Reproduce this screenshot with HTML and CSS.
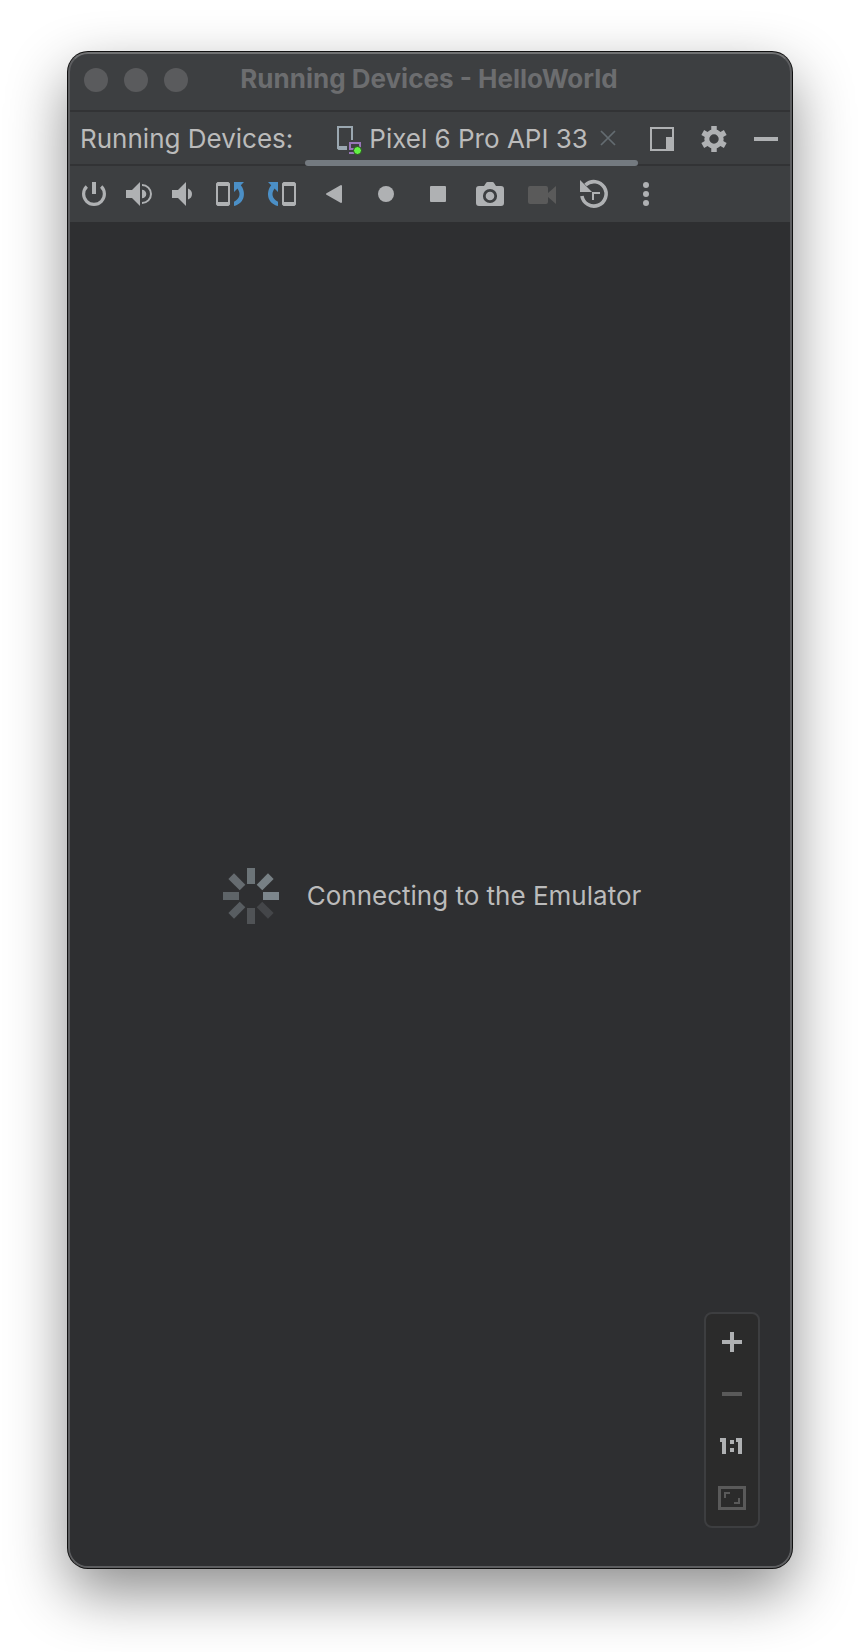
FILE: index.html
```html
<!DOCTYPE html>
<html lang="en">
<head>
<meta charset="utf-8">
<title>Running Devices - HelloWorld</title>
<link rel="stylesheet" href="styles.css">
</head>
<body>
<main class="window">
  <header class="titlebar">
    <div class="lights"><span class="light"></span><span class="light"></span><span class="light"></span></div>
    <h1 class="title">Running Devices - HelloWorld</h1>
  </header>

  <div class="tabs">
    <span class="tabs-label">Running Devices:</span>
    <div class="tab">
      <svg class="icon" viewBox="0 0 32 32" aria-hidden="true">
        <path d="M19 18V5H5v21h9" fill="none" stroke="#9aa7b0" stroke-width="2" stroke-linejoin="round"/>
        <path d="M4 4h16v2H4zM4 24h10v4H5.500l-1.500-1.500z" fill="#9aa7b0"/>
        <path d="M17 28v-7h10v6M22 27h-5M16 31h8" fill="none" stroke="#9876b8" stroke-width="2"/>
        <circle cx="24.500" cy="28.500" r="4" fill="#62f243" stroke="#2b4a22" stroke-width="1"/>
      </svg>
      <span class="tab-name">Pixel 6 Pro API 33</span>
      <button class="close" aria-label="Close tab"><svg viewBox="0 0 16 16" width="16" height="16"><path d="M1 1l14 14M15 1L1 15" stroke="#646c71" stroke-width="1.700"/></svg></button>
    </div>
    <div class="actions">
      <button class="action" aria-label="Window options"><svg class="icon" viewBox="0 0 32 32"><path d="M5 5h22v22H5z" fill="none" stroke="#afb1b3" stroke-width="2"/><path d="M20 14h8v14h-8z" fill="#afb1b3"/></svg></button>
      <button class="action" aria-label="Settings"><svg class="icon" viewBox="0 0 32 32"><g fill="none" stroke="#afb1b3"><circle cx="16" cy="16" r="7.200" stroke-width="5"/><path d="M16 3v5M16 24v5M4.740 9.500l4.330 2.500M22.930 20l4.330 2.500M27.260 9.500L22.930 12M9.070 20l-4.330 2.500" stroke-width="5.500"/></g></svg></button>
      <button class="action" aria-label="Hide"><svg class="icon" viewBox="0 0 32 32"><path d="M4 14h24v4H4z" fill="#afb1b3"/></svg></button>
    </div>
  </div>

  <div class="toolbar">
    <button class="tool tool-narrow" aria-label="Power"><svg class="icon" viewBox="0 0 32 32"><path d="M8.800 8.500A10.400 10.400 0 1 0 23.200 8.500" fill="none" stroke="#afb1b3" stroke-width="3.200"/><path d="M14 4h4v12h-4z" fill="#afb1b3"/></svg></button>
    <button class="tool tool-narrow" aria-label="Volume up"><svg class="icon" viewBox="0 0 32 32"><path d="M4 12h6l8-8v24l-8-8H4zM20 11.700a4.300 4.300 0 0 1 0 8.600z" fill="#afb1b3"/><path d="M20 7a9 9 0 0 1 0 18" fill="none" stroke="#afb1b3" stroke-width="2"/></svg></button>
    <button class="tool tool-narrow" aria-label="Volume down"><svg class="icon" viewBox="0 0 32 32"><path d="M6 12h6l8-8v24l-8-8H6zM22 10.500q4 1.500 4 5.500t-4 5.500z" fill="#afb1b3"/></svg></button>
    <button class="tool" aria-label="Rotate left"><svg class="icon" viewBox="0 0 32 32"><path fill-rule="evenodd" d="M3.500 4h11L16 5.500v21L14.500 28h-11L2 26.500v-21zM4 8v16h10V8z" fill="#afb1b3"/><path d="M20 4h10l-3.200 3.200C32 13.500 31.500 25 20 28v-4.300c6-3 7-8.200 3.500-13.200L20 14z" fill="#4b8fc6"/></svg></button>
    <button class="tool" aria-label="Rotate right"><svg class="icon" viewBox="0 0 32 32"><g transform="translate(32 0) scale(-1 1)"><path fill-rule="evenodd" d="M3.500 4h11L16 5.500v21L14.500 28h-11L2 26.500v-21zM4 8v16h10V8z" fill="#afb1b3"/><path d="M20 4h10l-3.200 3.200C32 13.500 31.500 25 20 28v-4.300c6-3 7-8.200 3.500-13.200L20 14z" fill="#4b8fc6"/></g></svg></button>
    <button class="tool" aria-label="Back"><svg class="icon" viewBox="0 0 32 32"><path d="M9 16L23 8v16z" fill="#afb1b3" stroke="#afb1b3" stroke-width="2" stroke-linejoin="round"/></svg></button>
    <button class="tool" aria-label="Home"><svg class="icon" viewBox="0 0 32 32"><circle cx="16" cy="16" r="8" fill="#afb1b3"/></svg></button>
    <button class="tool" aria-label="Overview"><svg class="icon" viewBox="0 0 32 32"><rect x="8" y="8" width="16" height="16" rx="1" fill="#afb1b3"/></svg></button>
    <button class="tool" aria-label="Take screenshot"><svg class="icon" viewBox="0 0 32 32"><path d="M10 8l2-3q.500-1 1.500-1h5q1 0 1.500 1l2 3h5q3 0 3 3v14q0 3-3 3H5q-3 0-3-3V11q0-3 3-3z" fill="#afb1b3"/><circle cx="16" cy="18" r="5.700" fill="#afb1b3" stroke="#3d3f41" stroke-width="2.800"/></svg></button>
    <button class="tool" aria-label="Record screen" disabled><svg class="icon" viewBox="0 0 32 32"><path d="M4 8h16q2 0 2 2v5l8-7v18l-8-7v5q0 2-2 2H4q-2 0-2-2V10q0-2 2-2z" fill="#5a5a5a"/></svg></button>
    <button class="tool" aria-label="Snapshots"><svg class="icon" viewBox="0 0 32 32"><path d="M7.500 7A12.200 12.200 0 1 1 3.900 18" fill="none" stroke="#afb1b3" stroke-width="3.600"/><path d="M2 2l4.500 4.500L14 14H2z" fill="#afb1b3"/><path d="M15 22v-7h7" fill="none" stroke="#afb1b3" stroke-width="2"/></svg></button>
    <button class="tool" aria-label="More"><svg class="icon" viewBox="0 0 32 32"><g fill="#afb1b3"><circle cx="16" cy="7" r="3"/><circle cx="16" cy="16" r="3"/><circle cx="16" cy="25" r="3"/></g></svg></button>
  </div>

  <section class="screen">
    <div class="status" role="status">
      <svg class="spinner" viewBox="-28 -28 56 56" aria-hidden="true">
        <path d="M12-4h16v8H12z" fill="#7c868c"/>
        <path d="M12-4h16v8H12z" fill="#778085" transform="rotate(-45)"/>
        <path d="M12-4h16v8H12z" fill="#6c7478" transform="rotate(-90)"/>
        <path d="M12-4h16v8H12z" fill="#666c70" transform="rotate(-135)"/>
        <path d="M12-4h16v8H12z" fill="#5e6468" transform="rotate(180)"/>
        <path d="M12-4h16v8H12z" fill="#585d61" transform="rotate(135)"/>
        <path d="M12-4h16v8H12z" fill="#505356" transform="rotate(90)"/>
        <path d="M12-4h16v8H12z" fill="#444649" transform="rotate(45)"/>
      </svg>
      <span>Connecting to the Emulator</span>
    </div>
    <div class="zoom">
      <button class="zoom-button" aria-label="Zoom in"><svg class="icon" viewBox="0 0 32 32"><path d="M6 14h8V6h4v8h8v4h-8v8h-4v-8H6z" fill="#afb1b3"/></svg></button>
      <button class="zoom-button" aria-label="Zoom out" disabled><svg class="icon" viewBox="0 0 32 32"><path d="M6 14h20v4H6z" fill="#5a5a5a"/></svg></button>
      <button class="zoom-button" aria-label="Actual size"><svg class="icon" viewBox="0 0 32 32"><path d="M4 8h6v16H6V12H4zM14 10h4v4h-4zM14 18h4v4h-4zM20 8h6v16h-4V12h-2z" fill="#afb1b3"/></svg></button>
      <button class="zoom-button" aria-label="Fit to screen" disabled><svg class="icon" viewBox="0 0 32 32"><g fill="none" stroke="#5a5a5a"><path d="M3.500 5.500h25v21h-25z" stroke-width="3"/><path d="M9 16v-5h5M18 21h5v-5" stroke-width="2"/></g></svg></button>
    </div>
  </section>
</main>
</body>
</html>
```
FILE: styles.css
```css
* {
  box-sizing: border-box;
}

body {
  margin: 0;
  padding: 52px 68px 84px;
  min-height: 100vh;
  display: flex;
  background: #fff;
  color: #bbb;
  font-family: Inter, "Liberation Sans", sans-serif;
  font-size: 26px;
  line-height: 32px;
}

button {
  margin: 0;
  padding: 0;
  border: 0;
  background: none;
  display: flex;
  align-items: center;
  justify-content: center;
}

.window {
  flex: 1;
  display: flex;
  flex-direction: column;
  border: 2px solid #5d5e60;
  border-top-color: #707172;
  border-radius: 20px;
  background: #3d3f41;
  box-shadow: 0 0 0 1px #111, 0 24px 60px rgba(0, 0, 0, 0.46);
  overflow: hidden;
}

.icon {
  display: block;
  flex: none;
  width: 32px;
  height: 32px;
  overflow: visible;
}

.titlebar {
  display: grid;
  grid-template-columns: 1fr auto 1fr;
  align-items: center;
  height: 58px;
  padding: 0 16px 4px 14px;
  border-bottom: 2px solid #323335;
}

.lights {
  display: flex;
  gap: 16px;
}

.light {
  width: 24px;
  height: 24px;
  border-radius: 50%;
  background: #5a5b5d;
}

.title {
  margin: 0;
  padding-bottom: 2px;
  color: #6c6d6f;
  font-size: 26px;
  font-weight: 700;
}

.tabs {
  display: flex;
  align-items: stretch;
  height: 54px;
  background: linear-gradient(#323335, #323335) bottom / 100% 2px no-repeat;
}

.tabs-label {
  padding: 11px 12px 0 10px;
  white-space: nowrap;
}

.tab {
  display: flex;
  align-items: center;
  gap: 4px;
  padding: 4px 22px 6px 28px;
  position: relative;
  white-space: nowrap;
}

.tab::after {
  content: "";
  position: absolute;
  left: 0;
  right: 0;
  bottom: 0;
  height: 6px;
  border-radius: 3px;
  background: #747a80;
}

.tab-name {
  padding-top: 2px;
}

.close {
  margin-left: 8px;
}

.actions {
  display: flex;
  gap: 4px;
  margin-left: auto;
}

.action {
  width: 48px;
}

.toolbar {
  display: flex;
  height: 56px;
  padding-left: 2px;
}

.tool {
  width: 52px;
}

.tool-narrow {
  width: 44px;
}

.screen {
  flex: 1;
  display: flex;
  align-items: center;
  justify-content: center;
  position: relative;
  background: #2e2f31;
}

.status {
  display: flex;
  align-items: center;
  gap: 28px;
  padding: 4px 0 0 4px;
}

.spinner {
  width: 56px;
  height: 56px;
}

.zoom {
  position: absolute;
  right: 30px;
  bottom: 38px;
  padding: 2px;
  border: 2px solid #3d3e40;
  border-radius: 8px;
  background: #2b2b2b;
}

.zoom-button {
  width: 48px;
  height: 52px;
}
```
